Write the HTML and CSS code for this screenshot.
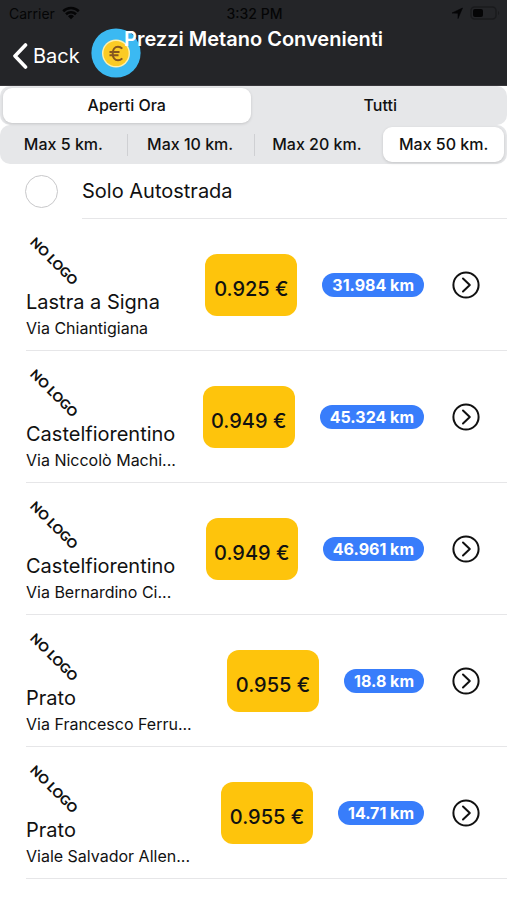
FILE: index.html
```html
<!DOCTYPE html>
<html lang="it">
<head>
<meta charset="utf-8">
<meta name="viewport" content="width=device-width, initial-scale=1">
<title>Prezzi Metano Convenienti</title>
<link rel="stylesheet" href="styles.css">
</head>
<body>
<svg class="defs" aria-hidden="true">
  <symbol id="go" viewBox="0 0 28 28">
    <circle cx="14" cy="14" r="12.6" fill="none" stroke="currentColor" stroke-width="2"/>
    <path d="M11 7.5 17.8 14 11 20.5" fill="none" stroke="currentColor" stroke-width="2" stroke-linecap="round" stroke-linejoin="round"/>
  </symbol>
</svg>
<header class="header">
  <div class="status">
    <span class="carrier">Carrier
      <svg class="wifi" viewBox="0 0 18 14" aria-hidden="true"><path d="M1.2 5.2a11.2 11.2 0 0 1 15.6 0M4 8.3a7.2 7.2 0 0 1 10 0" fill="none" stroke="currentColor" stroke-width="2.6"/><path d="M9 13.2 6 10.3a4.3 4.3 0 0 1 6 0z" fill="currentColor"/></svg>
    </span>
    <span class="time">3:32 PM</span>
    <span class="indicators">
      <svg class="location" viewBox="0 0 12 12" aria-hidden="true"><path d="M11.500 1 7 11.500V6.200L1 6z" fill="currentColor" stroke="currentColor" stroke-width=".6" stroke-linejoin="round"/></svg>
      <svg class="battery" viewBox="0 0 30 14" aria-hidden="true"><rect x="1" y="1" width="25" height="12" rx="3.5" fill="none" stroke="#1a1b1d" stroke-width="1.5"/><rect x="3" y="3" width="10" height="8" rx="2" fill="currentColor"/><path d="M28 5v4c1.500-.5 1.500-3.500 0-4z" fill="#1a1b1d"/></svg>
    </span>
  </div>
  <nav class="nav">
    <div class="nav-left">
      <button class="back" type="button">
        <svg class="chevron" viewBox="0 0 16 28" aria-hidden="true"><path d="M13.500 3 3 14l10.500 11" fill="none" stroke="currentColor" stroke-width="3.600" stroke-linecap="round" stroke-linejoin="round"/></svg>
        Back
      </button>
      <svg class="coin" viewBox="0 0 50 50" aria-hidden="true">
        <circle cx="25" cy="25" r="24.600" fill="#3bb9f2"/>
        <circle cx="25" cy="25.500" r="14" fill="#fff0ae"/>
        <circle cx="25" cy="25.500" r="12.600" fill="#fbcb25"/>
        <path d="M31.300 20.600c-1.300-1.300-2.700-1.900-4.300-1.900-3.200 0-5.300 2.800-5.300 6.800s2.100 6.800 5.300 6.800c1.600 0 3-.6 4.300-1.900M18.500 24h10M18.500 27.200h9" fill="none" stroke="#85551f" stroke-width="2"/>
      </svg>
    </div>
    <h1 class="title">Prezzi Metano Convenienti</h1>
  </nav>
</header>
<main>
  <div class="segments">
    <button class="segment selected" type="button">Aperti Ora</button>
    <button class="segment" type="button">Tutti</button>
  </div>
  <div class="segments">
    <button class="segment" type="button">Max 5 km.</button>
    <button class="segment divided" type="button">Max 10 km.</button>
    <button class="segment divided" type="button">Max 20 km.</button>
    <button class="segment selected" type="button">Max 50 km.</button>
  </div>
  <div class="filter">
    <input class="check" type="checkbox" id="highway">
    <label class="filter-label" for="highway">Solo Autostrada</label>
  </div>
  <ul class="stations">
    <li class="station">
      <div class="info"><div class="logo"><span class="logo-text">NO LOGO</span></div><h2 class="city">Lastra a Signa</h2><p class="street">Via Chiantigiana</p></div>
      <span class="price">0.925 €</span><span class="distance">31.984 km</span>
      <button class="open" type="button" aria-label="Lastra a Signa"><svg class="go"><use href="#go"/></svg></button>
    </li>
    <li class="station">
      <div class="info"><div class="logo"><span class="logo-text">NO LOGO</span></div><h2 class="city">Castelfiorentino</h2><p class="street">Via Niccolò Machi...</p></div>
      <span class="price">0.949 €</span><span class="distance">45.324 km</span>
      <button class="open" type="button" aria-label="Castelfiorentino"><svg class="go"><use href="#go"/></svg></button>
    </li>
    <li class="station">
      <div class="info"><div class="logo"><span class="logo-text">NO LOGO</span></div><h2 class="city">Castelfiorentino</h2><p class="street">Via Bernardino Ci...</p></div>
      <span class="price">0.949 €</span><span class="distance">46.961 km</span>
      <button class="open" type="button" aria-label="Castelfiorentino"><svg class="go"><use href="#go"/></svg></button>
    </li>
    <li class="station">
      <div class="info"><div class="logo"><span class="logo-text">NO LOGO</span></div><h2 class="city">Prato</h2><p class="street">Via Francesco Ferru...</p></div>
      <span class="price">0.955 €</span><span class="distance">18.8 km</span>
      <button class="open" type="button" aria-label="Prato"><svg class="go"><use href="#go"/></svg></button>
    </li>
    <li class="station">
      <div class="info"><div class="logo"><span class="logo-text">NO LOGO</span></div><h2 class="city">Prato</h2><p class="street">Viale Salvador Allen...</p></div>
      <span class="price">0.955 €</span><span class="distance">14.71 km</span>
      <button class="open" type="button" aria-label="Prato"><svg class="go"><use href="#go"/></svg></button>
    </li>
  </ul>
</main>
</body>
</html>
```
FILE: styles.css
```css
* {
  box-sizing: border-box;
}

body {
  margin: 0;
  background: #fff;
  color: #111;
  font-family: Inter, "Liberation Sans", sans-serif;
}

button {
  margin: 0;
  padding: 0;
  border: 0;
  background: none;
  color: inherit;
  font-family: inherit;
}

h1, h2, p, ul {
  margin: 0;
  padding: 0;
}

.defs {
  display: none;
}

.header {
  background: #242528;
  border-bottom: 1px solid #38373b;
}

.status {
  display: grid;
  grid-template-columns: 1fr auto 1fr;
  align-items: center;
  height: 28px;
  padding: 0 7px 2px 9px;
  color: #050506;
  font-size: 14px;
}

.carrier, .indicators {
  display: flex;
  align-items: center;
  gap: 7px;
}

.indicators {
  justify-content: flex-end;
}

.time {
  font-weight: 500;
}

.wifi {
  width: 18px;
  height: 14px;
}

.location {
  width: 12px;
  height: 12px;
}

.battery {
  width: 30px;
  height: 14px;
}

.nav {
  display: grid;
  height: 57px;
}

.nav-left, .title {
  grid-area: 1 / 1;
}

.nav-left {
  display: flex;
  align-items: flex-start;
  gap: 11px;
  padding-left: 12px;
}

.back {
  display: flex;
  align-items: center;
  gap: 5px;
  height: 56px;
  color: #fff;
  font-size: 20px;
}

.chevron {
  width: 16px;
  height: 28px;
}

.coin {
  width: 50px;
  height: 50px;
}

.title {
  z-index: 1;
  justify-self: center;
  color: #fff;
  font-size: 20px;
  font-weight: 600;
  line-height: 22px;
  pointer-events: none;
}

.segments {
  display: grid;
  grid-auto-flow: column;
  grid-auto-columns: 1fr;
  height: 39px;
  padding: 2px 0;
  border-radius: 10px;
  background: #e6e7e9;
}

.segment {
  padding-bottom: 1px;
  border-radius: 9px;
  font-size: 16px;
  font-weight: 500;
}

.divided {
  border-radius: 0;
  background: linear-gradient(#cfd0d3, #cfd0d3) left center / 1px 22px no-repeat;
}

.selected {
  margin: 0 3px;
  background: #fff;
  box-shadow: 0 1px 3px rgba(0, 0, 0, 0.15);
}

.filter {
  display: flex;
  align-items: center;
  gap: 24px;
  height: 55px;
  padding-left: 25px;
}

.check {
  appearance: none;
  width: 33px;
  height: 33px;
  margin: 0;
  border: 1px solid #c8c8ca;
  border-radius: 50%;
}

.check:checked {
  background: #357cf6;
}

.filter-label {
  display: flex;
  flex: 1;
  align-items: center;
  align-self: stretch;
  border-bottom: 1px solid #e6e6e8;
  font-size: 20px;
}

.stations {
  list-style: none;
}

.station {
  display: flex;
  align-items: center;
  height: 132px;
  margin-left: 26px;
  padding-right: 27px;
  border-bottom: 1px solid #e6e6e8;
}

.info {
  flex: 1;
  min-width: 0;
  padding-top: 4px;
  white-space: nowrap;
}

.logo {
  display: flex;
  align-items: center;
  justify-content: center;
  width: 56px;
  height: 56px;
}

.logo-text {
  font-family: Lato, "Open Sans", sans-serif;
  font-size: 13px;
  font-weight: 900;
  line-height: 16px;
  transform: rotate(45deg);
}

.city {
  font-size: 20px;
  font-weight: 400;
  line-height: 26px;
}

.street {
  font-size: 16px;
  font-weight: 400;
  line-height: 26px;
}

.price {
  width: 92px;
  margin-right: 25px;
  padding: 22px 0 14px;
  border-radius: 12px;
  background: #fec40c;
  font-size: 20px;
  font-weight: 500;
  line-height: 26px;
  text-align: center;
}

.distance {
  margin-right: 28px;
  padding: 0 10px;
  border-radius: 12px;
  background: #387dfb;
  color: #fff;
  font-size: 16px;
  font-weight: 700;
  line-height: 24px;
}

.open {
  display: flex;
  color: #111;
}

.go {
  width: 28px;
  height: 28px;
}
```
